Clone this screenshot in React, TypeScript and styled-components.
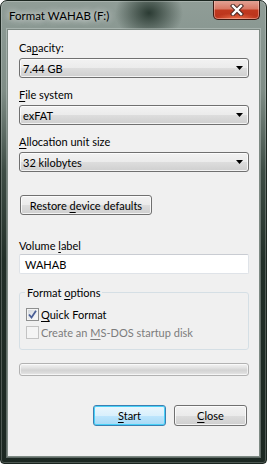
import React from "react";
import styled, { createGlobalStyle } from "styled-components";

const GlobalStyle = createGlobalStyle`
  html, body {
    margin: 0;
    padding: 0;
    background: #ffffff;
  }
  body {
    font-family: "Segoe UI", Lato, "Noto Sans", "Liberation Sans", sans-serif;
    font-size: 11px;
    color: #000;
  }
`;

const Window = styled.div`
  box-sizing: border-box;
  width: 267px;
  height: 464px;
  display: flex;
  flex-direction: column;
  padding: 0 6px 6px;
  border: 1px solid #1b2620;
  border-radius: 7px 7px 4px 4px;
  overflow: hidden;
  background:
    radial-gradient(ellipse 34px 28px at 148px 12px, rgba(38, 54, 46, 0.95), rgba(38, 54, 46, 0) 100%),
    linear-gradient(180deg, #909d97 0px, #8a9892 30px, #7f8d86 90px, #3e4d45 170px, #222f28 260px, #1c2822 100%);
  box-shadow: inset 0 0 0 1px rgba(255, 255, 255, 0.22);
`;

const TitleBar = styled.div`
  height: 28px;
  display: flex;
  align-items: flex-start;
  justify-content: space-between;
  flex-shrink: 0;
`;

const Title = styled.div`
  margin-top: 7px;
  padding-left: 2px;
  font-size: 11.5px;
  line-height: 16px;
  color: #000;
  text-shadow: 0 0 6px rgba(255, 255, 255, 0.9), 0 0 10px rgba(255, 255, 255, 0.6);
`;

const CloseButton = styled.div`
  box-sizing: border-box;
  width: 47px;
  height: 20px;
  margin-top: -1px;
  display: flex;
  align-items: center;
  justify-content: center;
  border: 1px solid #3d1a12;
  border-top: none;
  border-radius: 0 0 5px 5px;
  background:
    radial-gradient(ellipse 22px 6px at 50% 100%, rgba(240, 120, 80, 0.9), rgba(240, 120, 80, 0)),
    linear-gradient(180deg, #e3a79a 0%, #d97a66 45%, #c0391f 55%, #b9321b 100%);
  box-shadow: inset 0 0 0 1px rgba(255, 210, 200, 0.45);
`;

const Client = styled.div`
  flex: 1;
  display: flex;
  flex-direction: column;
  background: #f0f0f0;
  border: 1px solid #7d8983;
  padding: 10px 10px 0 11px;
  box-shadow: 0 0 0 1px rgba(220, 230, 225, 0.35);
`;

const Key = styled.span`
  text-decoration: underline;
  text-underline-offset: 2px;
`;

const Label = styled.div<{ $gap?: number }>`
  height: 15px;
  line-height: 15px;
  margin-top: ${(p) => p.$gap ?? 0}px;
  white-space: nowrap;
`;

const Combo = styled.div`
  box-sizing: border-box;
  height: 20px;
  margin-top: 3px;
  display: flex;
  align-items: center;
  justify-content: space-between;
  padding: 0 5px 0 3px;
  border: 1px solid #707070;
  border-radius: 3px;
  background: linear-gradient(180deg, #f2f2f2 0%, #ebebeb 50%, #dddddd 51%, #cfcfcf 100%);
  box-shadow: inset 0 0 0 1px rgba(255, 255, 255, 0.75);
  line-height: 15px;
`;

const PushButton = styled.div<{ $width: number; $default?: boolean; $height?: number }>`
  box-sizing: border-box;
  width: ${(p) => p.$width}px;
  height: ${(p) => p.$height ?? 20}px;
  display: flex;
  align-items: center;
  justify-content: center;
  border: 1px solid ${(p) => (p.$default ? "#3c7fb1" : "#707070")};
  border-radius: 3px;
  background: ${(p) =>
    p.$default
      ? "linear-gradient(180deg, #eaf6fd 0%, #d9f0fc 50%, #bee6fd 51%, #a7d9f5 100%)"
      : "linear-gradient(180deg, #f2f2f2 0%, #ebebeb 50%, #dddddd 51%, #cfcfcf 100%)"};
  box-shadow: ${(p) =>
    p.$default ? "inset 0 0 0 1px #48d1f8" : "inset 0 0 0 1px rgba(255, 255, 255, 0.75)"};
  line-height: 15px;
  white-space: nowrap;
`;

const RestoreButton = styled(PushButton)`
  margin-top: 23px;
  margin-left: 1px;
`;

const TextBox = styled.div`
  box-sizing: border-box;
  height: 20px;
  margin-top: 1px;
  display: flex;
  align-items: center;
  padding-left: 5px;
  background: #ffffff;
  border: 1px solid #dfe3e8;
  border-top-color: #c9ccd2;
  border-radius: 2px;
  line-height: 15px;
`;

const Group = styled.fieldset`
  margin: 11px 0 0;
  padding: 0 6px 9px;
  border: 1px solid #d5dfe5;
  border-radius: 3px;
  min-inline-size: 0;
`;

const Legend = styled.legend`
  margin-left: -1px;
  padding: 0 2px;
  height: 15px;
  line-height: 15px;
`;

const CheckRow = styled.div<{ $gap: number; $disabled?: boolean }>`
  display: flex;
  align-items: center;
  gap: 2px;
  height: 15px;
  line-height: 15px;
  margin-top: ${(p) => p.$gap}px;
  color: ${(p) => (p.$disabled ? "#7c7c7c" : "#000")};
  white-space: nowrap;
`;

const CheckBox = styled.span<{ $disabled?: boolean }>`
  box-sizing: border-box;
  width: 13px;
  height: 13px;
  flex-shrink: 0;
  display: flex;
  align-items: center;
  justify-content: center;
  border: 1px solid ${(p) => (p.$disabled ? "#c3c3c3" : "#8e8f8f")};
  background: ${(p) =>
    p.$disabled ? "#f4f4f4" : "linear-gradient(135deg, #cfd4da 0%, #eef0f2 60%, #fbfbfb 100%)"};
  box-shadow: ${(p) => (p.$disabled ? "none" : "inset 0 0 0 1px #f4f4f4")};
`;

const Progress = styled.div`
  box-sizing: border-box;
  height: 13px;
  margin-top: 13px;
  border: 1px solid #b2b2b2;
  border-radius: 3px;
  background: linear-gradient(180deg, #f3f3f3 0%, #e2e2e2 35%, #d3d3d3 55%, #dcdcdc 80%, #ebebeb 100%);
  box-shadow: inset 0 0 0 1px rgba(255, 255, 255, 0.6);
`;

const ButtonRow = styled.div`
  display: flex;
  justify-content: flex-end;
  gap: 8px;
  margin-top: 29px;
  margin-right: 2px;
`;

function DropArrow() {
  return (
    <svg width="7" height="4" viewBox="0 0 7 4">
      <polygon points="0,0 7,0 3.5,4" fill="#000" />
    </svg>
  );
}

function CloseGlyph() {
  return (
    <svg width="14" height="12" viewBox="0 0 14 12">
      <path d="M3 2 L11 10 M11 2 L3 10" stroke="#4a2a24" strokeWidth="4.4" strokeLinecap="square" />
      <path d="M3 2 L11 10 M11 2 L3 10" stroke="#ffffff" strokeWidth="2.4" strokeLinecap="square" />
    </svg>
  );
}

function CheckMark() {
  return (
    <svg width="9" height="9" viewBox="0 0 9 9">
      <path d="M1 4.5 L3.5 7.5 L8 0.8" stroke="#4a5f97" strokeWidth="1.8" fill="none" />
    </svg>
  );
}

export default function App() {
  return (
    <>
      <GlobalStyle />
      <Window>
        <TitleBar>
          <Title>Format WAHAB (F:)</Title>
          <CloseButton>
            <CloseGlyph />
          </CloseButton>
        </TitleBar>
        <Client>
          <Label>
            Ca<Key>p</Key>acity:
          </Label>
          <Combo>
            <span>7.44 GB</span>
            <DropArrow />
          </Combo>

          <Label $gap={9}>
            <Key>F</Key>ile system
          </Label>
          <Combo>
            <span>exFAT</span>
            <DropArrow />
          </Combo>

          <Label $gap={9}>
            <Key>A</Key>llocation unit size
          </Label>
          <Combo>
            <span>32 kilobytes</span>
            <DropArrow />
          </Combo>

          <RestoreButton $width={132}>
            <span>
              Restore <Key>d</Key>evice defaults
            </span>
          </RestoreButton>

          <Label $gap={23}>
            Volume <Key>l</Key>abel
          </Label>
          <TextBox>WAHAB</TextBox>

          <Group>
            <Legend>
              Format <Key>o</Key>ptions
            </Legend>
            <CheckRow $gap={7}>
              <CheckBox>
                <CheckMark />
              </CheckBox>
              <span>
                <Key>Q</Key>uick Format
              </span>
            </CheckRow>
            <CheckRow $gap={3} $disabled>
              <CheckBox $disabled />
              <span>
                Create an <Key>M</Key>S-DOS startup disk
              </span>
            </CheckRow>
          </Group>

          <Progress />

          <ButtonRow>
            <PushButton $width={73} $height={21} $default>
              <span>
                <Key>S</Key>tart
              </span>
            </PushButton>
            <PushButton $width={73} $height={21}>
              <span>
                <Key>C</Key>lose
              </span>
            </PushButton>
          </ButtonRow>
        </Client>
      </Window>
    </>
  );
}
